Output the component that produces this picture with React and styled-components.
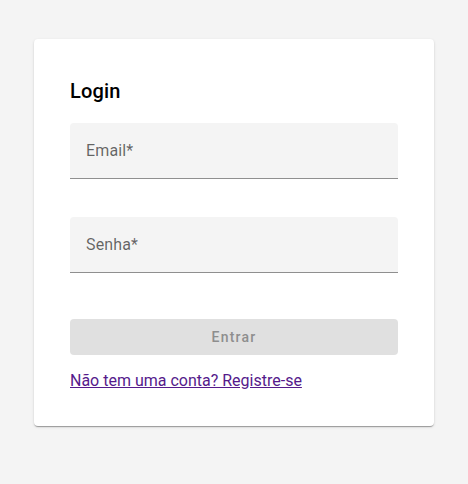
import React from 'react';
import styled, { createGlobalStyle } from 'styled-components';

const GlobalStyle = createGlobalStyle`
  html, body {
    margin: 0;
    padding: 0;
    background: #f4f4f4;
    font-family: Roboto, 'Liberation Sans', sans-serif;
  }
`;

const Page = styled.div`
  min-height: 484px;
  padding: 39px 34px;
  box-sizing: border-box;
`;

const Card = styled.form`
  width: 400px;
  box-sizing: border-box;
  background: #fff;
  border-radius: 4px;
  padding: 36px 36px 33px;
  box-shadow: 0px 2px 1px -1px rgba(0,0,0,0.2), 0px 1px 1px 0px rgba(0,0,0,0.14), 0px 1px 3px 0px rgba(0,0,0,0.12);
  display: flex;
  flex-direction: column;
`;

const Title = styled.h2`
  margin: 0 0 16px;
  font-size: 20px;
  font-weight: 500;
  line-height: 32px;
  color: #000;
  letter-spacing: 0.15px;
`;

const Field = styled.label`
  display: flex;
  align-items: center;
  height: 55px;
  padding: 0 16px;
  margin-bottom: ${p => p.$gap}px;
  background: #f4f4f4;
  border-radius: 4px 4px 0 0;
  border-bottom: 1px solid #8f8f8f;
  font-size: 16px;
  color: rgba(0, 0, 0, 0.6);
  letter-spacing: 0.15px;
  cursor: text;
`;

const Button = styled.button`
  height: 36px;
  border: none;
  border-radius: 4px;
  background: #e0e0e0;
  color: #8e8e8e;
  font-family: inherit;
  font-size: 14px;
  font-weight: 500;
  letter-spacing: 1.25px;
  margin-bottom: 14px;
`;

const Link = styled.a`
  font-size: 16px;
  line-height: 24px;
  color: #551a8b;
  text-decoration: underline;
  align-self: flex-start;
`;

export default function App() {
  return (
    <Page>
      <GlobalStyle />
      <Card onSubmit={e => e.preventDefault()}>
        <Title>Login</Title>
        <Field $gap={38}>Email*</Field>
        <Field $gap={46}>Senha*</Field>
        <Button type="submit" disabled>Entrar</Button>
        <Link href="#">Não tem uma conta? Registre-se</Link>
      </Card>
    </Page>
  );
}
